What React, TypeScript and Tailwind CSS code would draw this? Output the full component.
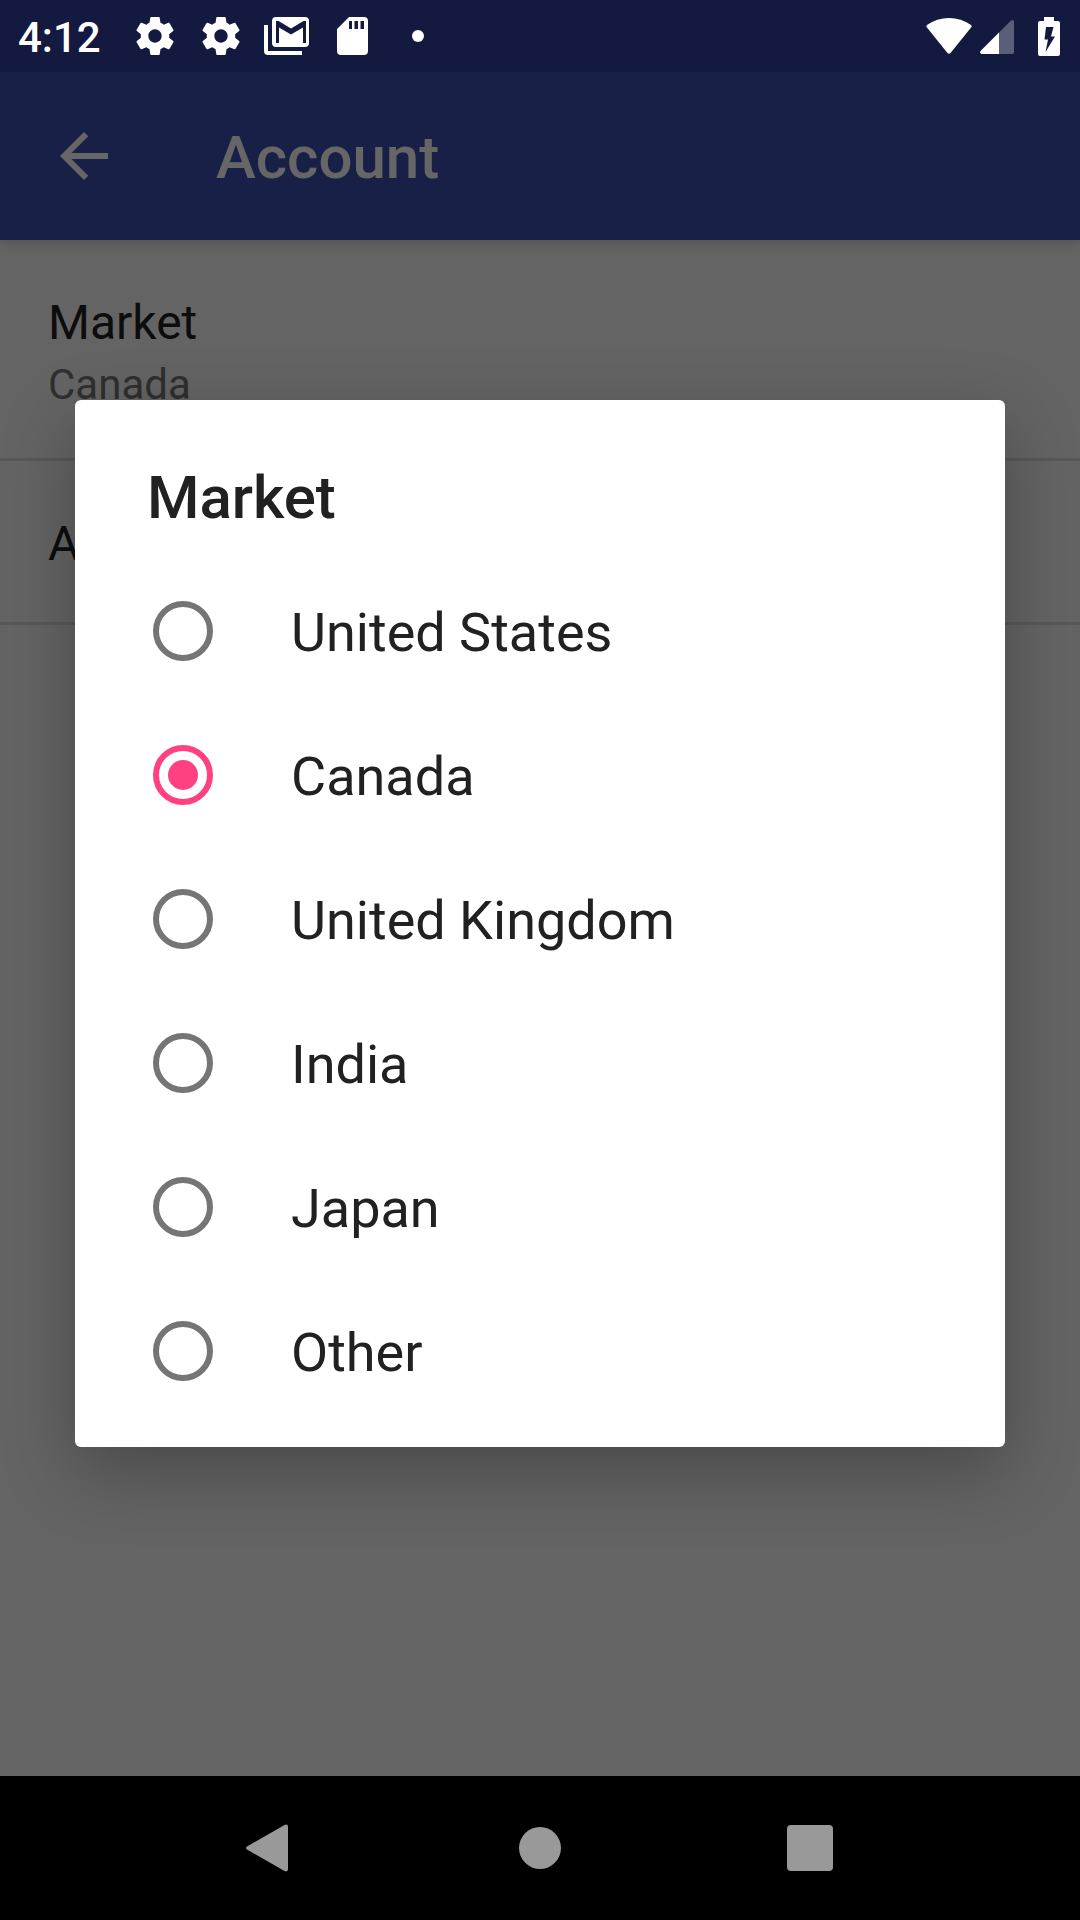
import { useState } from "react";

const markets = ["United States", "Canada", "United Kingdom", "India", "Japan", "Other"];

function GearIcon() {
  return (
    <svg viewBox="2 2 20 20" className="size-[38px]" fill="currentColor" aria-hidden="true">
      <path d="M19.43 12.98c.04-.32.07-.64.07-.98s-.03-.66-.07-.98l2.11-1.65c.19-.15.24-.42.12-.64l-2-3.46c-.12-.22-.39-.3-.61-.22l-2.49 1c-.52-.4-1.08-.73-1.69-.98l-.38-2.65A.488.488 0 0 0 14 2h-4c-.25 0-.46.18-.49.42l-.38 2.65c-.61.25-1.17.59-1.69.98l-2.49-1c-.23-.09-.49 0-.61.22l-2 3.46c-.13.22-.07.49.12.64l2.11 1.65c-.04.32-.07.65-.07.98s.03.66.07.98l-2.11 1.65c-.19.15-.24.42-.12.64l2 3.46c.12.22.39.3.61.22l2.49-1c.52.4 1.08.73 1.69.98l.38 2.65c.03.24.24.42.49.42h4c.25 0 .46-.18.49-.42l.38-2.65c.61-.25 1.17-.59 1.69-.98l2.49 1c.23.09.49 0 .61-.22l2-3.46c.12-.22.07-.49-.12-.64l-2.11-1.65zM12 15.5c-1.93 0-3.5-1.57-3.5-3.5s1.57-3.5 3.5-3.5 3.5 1.57 3.5 3.5-1.57 3.5-3.5 3.5z" />
    </svg>
  );
}

function MailStackIcon() {
  return (
    <svg viewBox="0 0 45 38" className="h-[38px] w-[45px]" fill="currentColor" aria-hidden="true">
      <path
        fillRule="evenodd"
        d="M12 0h29a4 4 0 0 1 4 4v22a4 4 0 0 1-4 4H12a4 4 0 0 1-4-4V4a4 4 0 0 1 4-4zM12 4v22h3V10.500l12 7 12-7V26h3V4h-2.500L27 11.500 14.500 4z"
      />
      <path d="M0 8h4v26h34v4H4a4 4 0 0 1-4-4z" />
    </svg>
  );
}

function SdCardIcon() {
  return (
    <svg viewBox="0 0 31 38" className="h-[38px] w-[31px]" fill="currentColor" aria-hidden="true">
      <path
        fillRule="evenodd"
        d="M12 0h15a4 4 0 0 1 4 4v30a4 4 0 0 1-4 4H4a4 4 0 0 1-4-4V12zM12 4v8h3V4zM17.500 4v8h3.500V4zM23.500 4v8h3.500V4z"
      />
    </svg>
  );
}

function StatusBar() {
  return (
    <div className="relative z-20 flex h-[72px] items-center justify-between bg-[#141940] pr-5 pl-[18px] text-white">
      <div className="flex items-center">
        <time className="w-[118px] pt-1 text-[42px] leading-[48px] font-medium">4:12</time>
        <div className="flex items-center gap-6">
          <div className="flex items-center gap-7">
            <GearIcon />
            <GearIcon />
          </div>
          <div className="flex items-center gap-7">
            <MailStackIcon />
            <SdCardIcon />
            <span className="ml-4 size-3 rounded-full bg-white" />
          </div>
        </div>
      </div>
      <div className="flex items-center">
        <svg viewBox="0 0 46 36" className="mr-2 h-9 w-[46px]" fill="currentColor" aria-label="Wi-Fi">
          <path d="M1 7Q11 0 23 0t22 7q1 1 .5 2L24.500 35q-1.500 1.500-3 0L.5 9Q0 8 1 7z" />
        </svg>
        <svg viewBox="0 0 34 38" className="mr-6 h-[38px] w-[34px]" fill="currentColor" aria-label="Cellular signal">
          <path opacity=".3" d="M19 15.500 31 3.500Q32 3 33 3q1 .5 1 1.500V35q0 2-2 2H19z" />
          <path d="M19 15.500V37H1.500Q-.5 36 .5 34z" />
        </svg>
        <svg viewBox="0 0 22 39" className="h-[39px] w-[22px]" fill="currentColor" aria-label="Battery charging">
          <path
            fillRule="evenodd"
            d="M6 0h10v4h4a2 2 0 0 1 2 2v31a2 2 0 0 1-2 2H2a2 2 0 0 1-2-2V6a2 2 0 0 1 2-2h4zM8 10 6.500 22.500H10L7.500 35 17 19.500h-4L15.500 10z"
          />
        </svg>
      </div>
    </div>
  );
}

function NavigationBar() {
  return (
    <nav className="relative z-20 flex h-36 items-center justify-center gap-[174px] bg-black text-[#999999]">
      <button type="button" aria-label="Back" className="grid size-24 place-items-center">
        <svg viewBox="0 0 48 48" className="size-12" fill="currentColor" aria-hidden="true">
          <path d="M1 22.500 38.500 1Q42-.5 42 3v42q0 3.500-3.500 2L1 25.500q-2-1.500 0-3z" />
        </svg>
      </button>
      <button type="button" aria-label="Home" className="grid size-24 place-items-center">
        <span className="size-[42px] rounded-full bg-[#999999]" />
      </button>
      <button type="button" aria-label="Recent apps" className="grid size-24 place-items-center">
        <span className="size-[46px] rounded bg-[#999999]" />
      </button>
    </nav>
  );
}

function MarketDialog() {
  const [selected, setSelected] = useState("Canada");
  return (
    <div className="absolute inset-0 z-10 flex items-center bg-black/60 px-[75px] pt-[72px] pb-[145px]">
      <div
        role="dialog"
        aria-modal="true"
        aria-labelledby="dialog-title"
        className="w-full rounded-md bg-white pb-6 text-[#212121] shadow-[0_24px_72px_rgba(0,0,0,0.28)]"
      >
        <h2 id="dialog-title" className="px-[72px] pt-[62px] pb-[25px] text-[60px] leading-[72px] font-medium">
          Market
        </h2>
        <div role="radiogroup" aria-labelledby="dialog-title">
          {markets.map((market) => (
            <label key={market} className="flex h-36 items-center gap-[78px] px-[78px] text-[54px] leading-[64px]">
              <input
                type="radio"
                name="market"
                value={market}
                checked={selected === market}
                onChange={() => setSelected(market)}
                className="grid size-[60px] shrink-0 appearance-none place-content-center rounded-full border-6 border-[#757575] checked:border-[#ff4081] checked:before:size-[30px] checked:before:rounded-full checked:before:bg-[#ff4081] checked:before:content-['']"
              />
              <span className="pt-1">{market}</span>
            </label>
          ))}
        </div>
      </div>
    </div>
  );
}

export default function App() {
  return (
    <div className="relative flex min-h-screen flex-col bg-[#fafafa] font-['Roboto',sans-serif]">
      <StatusBar />
      <header className="relative flex h-[168px] items-center gap-24 bg-[#3f51b5] px-12 text-white shadow-[0_3px_12px_rgba(0,0,0,0.2)]">
        <button type="button" aria-label="Navigate up">
          <svg viewBox="0 0 24 24" className="size-[72px]" fill="currentColor" aria-hidden="true">
            <path d="M20 11H7.830l5.590-5.590L12 4l-8 8 8 8 1.410-1.410L7.830 13H20v-2z" />
          </svg>
        </button>
        <h1 className="pt-1 text-[60px] leading-[72px] font-medium">Account</h1>
      </header>
      <main className="flex-1">
        <ul>
          <li className="border-b-3 border-[#dcdcdc] px-12 pt-[54px] pb-12 text-[#212121]">
            <p className="text-[48px] leading-[58px]">Market</p>
            <p className="pt-2 text-[42px] leading-[50px] text-[#757575]">Canada</p>
          </li>
          <li className="border-b-3 border-[#dcdcdc] px-12 pt-[54px] pb-[49px] text-[48px] leading-[58px] text-[#212121]">A</li>
        </ul>
      </main>
      <NavigationBar />
      <MarketDialog />
    </div>
  );
}
